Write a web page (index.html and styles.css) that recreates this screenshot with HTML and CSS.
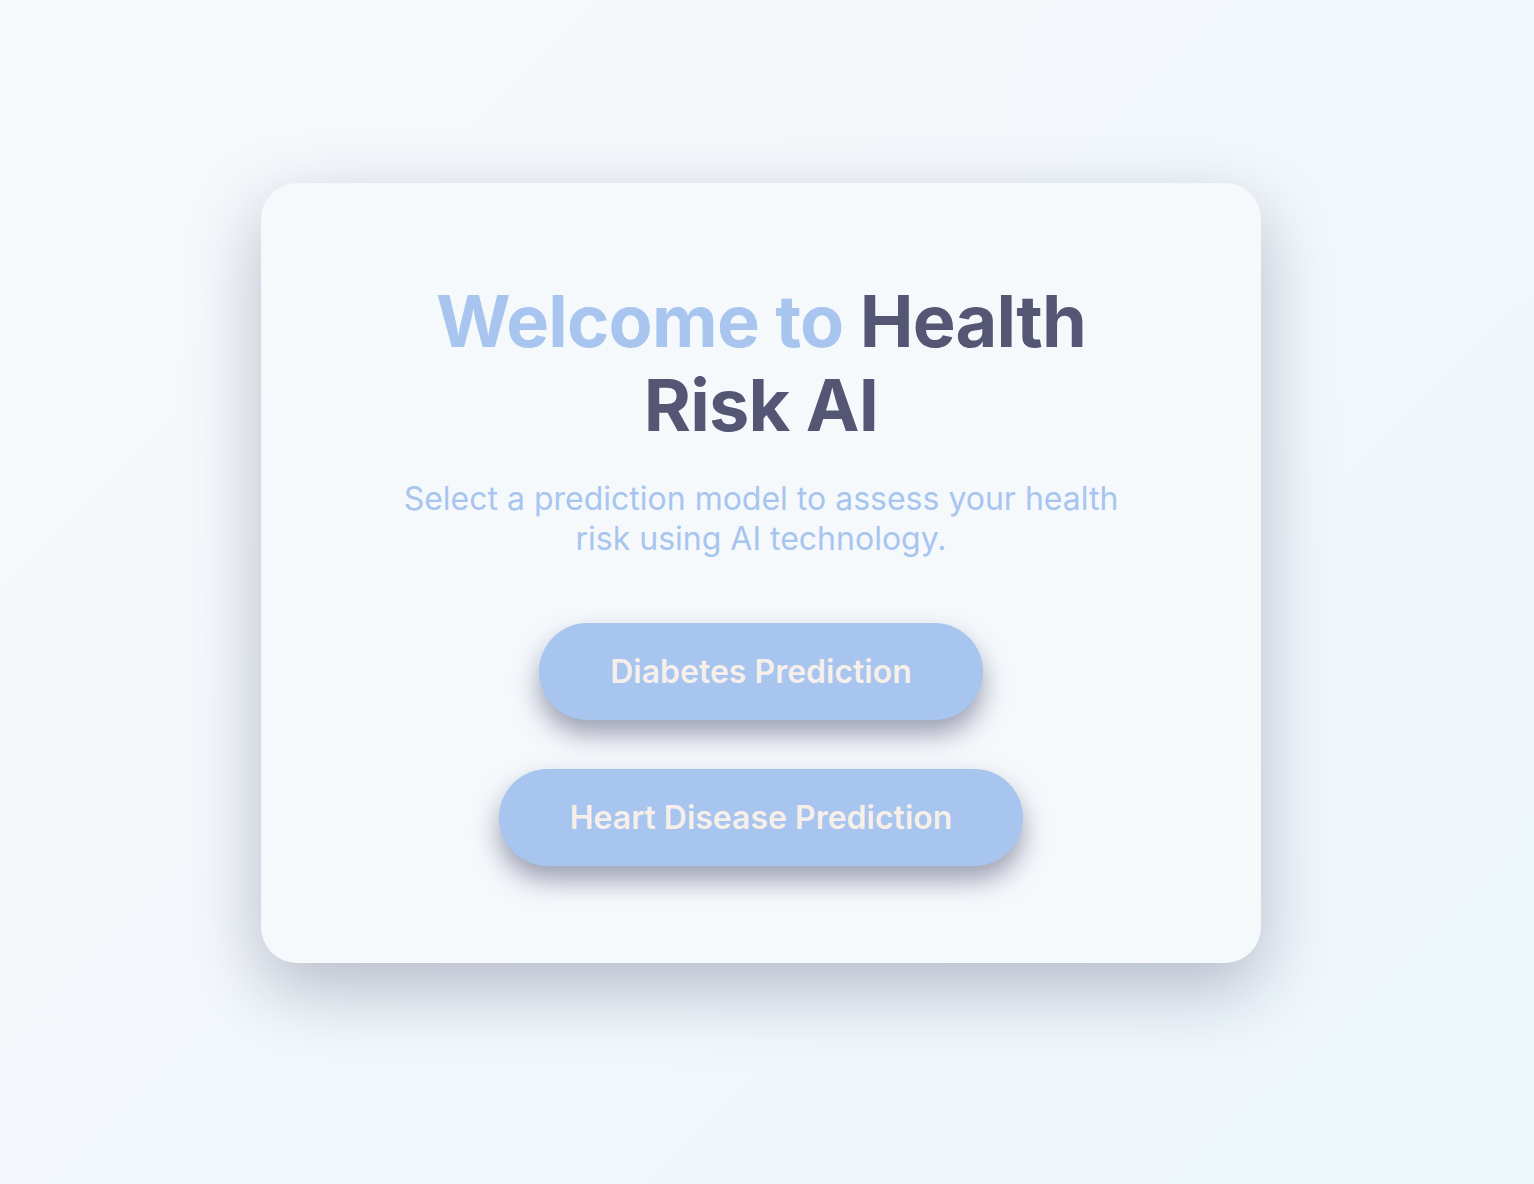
FILE: index.html
```html
<!DOCTYPE html>
<html lang="en">
<head>
<meta charset="utf-8">
<title>Health Risk AI</title>
<link rel="stylesheet" href="styles.css">
</head>
<body>
<main class="page">
  <section class="card">
    <h1 class="title"><span class="title-accent">Welcome to</span> <span class="title-main">Health</span> <span class="title-main">Risk AI</span></h1>
    <p class="subtitle">Select a prediction model to assess your health risk using AI technology.</p>
    <div class="actions">
      <button class="btn" type="button">Diabetes Prediction</button>
      <button class="btn" type="button">Heart Disease Prediction</button>
    </div>
  </section>
</main>
</body>
</html>
```

FILE: styles.css
```css
* { box-sizing: border-box; }
html, body { margin: 0; padding: 0; }
body {
  font-family: Inter, "Noto Sans", sans-serif;
  background: linear-gradient(135deg, #f6f9fc 0%, #f3f8fc 50%, #edf7fc 100%);
  min-height: 100vh;
}
.page {
  min-height: 100vh;
  display: flex;
  align-items: center;
  justify-content: center;
  padding: 0 12px 38px 0;
}
.card {
  width: 1000px;
  background: #f5f9fc;
  border-radius: 36px;
  padding: 96px 40px 97px;
  display: flex;
  flex-direction: column;
  align-items: center;
  text-align: center;
  box-shadow: 0 26px 70px rgba(84, 86, 119, 0.38);
}
.title {
  margin: 0;
  max-width: 730px;
  font-size: 72px;
  line-height: 84px;
  font-weight: 700;
  color: #555674;
  letter-spacing: -0.8px;
}
.title-accent { color: #a7c5ee; }
.title-main { color: #555674; }
.subtitle {
  margin: 32px 0 0;
  max-width: 740px;
  font-size: 32px;
  line-height: 40px;
  font-weight: 400;
  color: #a7c5ee;
}
.actions {
  margin-top: 64px;
  display: flex;
  flex-direction: column;
  align-items: center;
  gap: 49px;
}
.btn {
  font-family: Inter, "Noto Sans", sans-serif;
  font-size: 32px;
  line-height: 39px;
  font-weight: 600;
  color: #f7efe9;
  background: #a7c5ee;
  border: none;
  border-radius: 999px;
  padding: 29px 71px;
  box-shadow: 0 14px 26px rgba(84, 86, 119, 0.55);
  cursor: pointer;
}
```
